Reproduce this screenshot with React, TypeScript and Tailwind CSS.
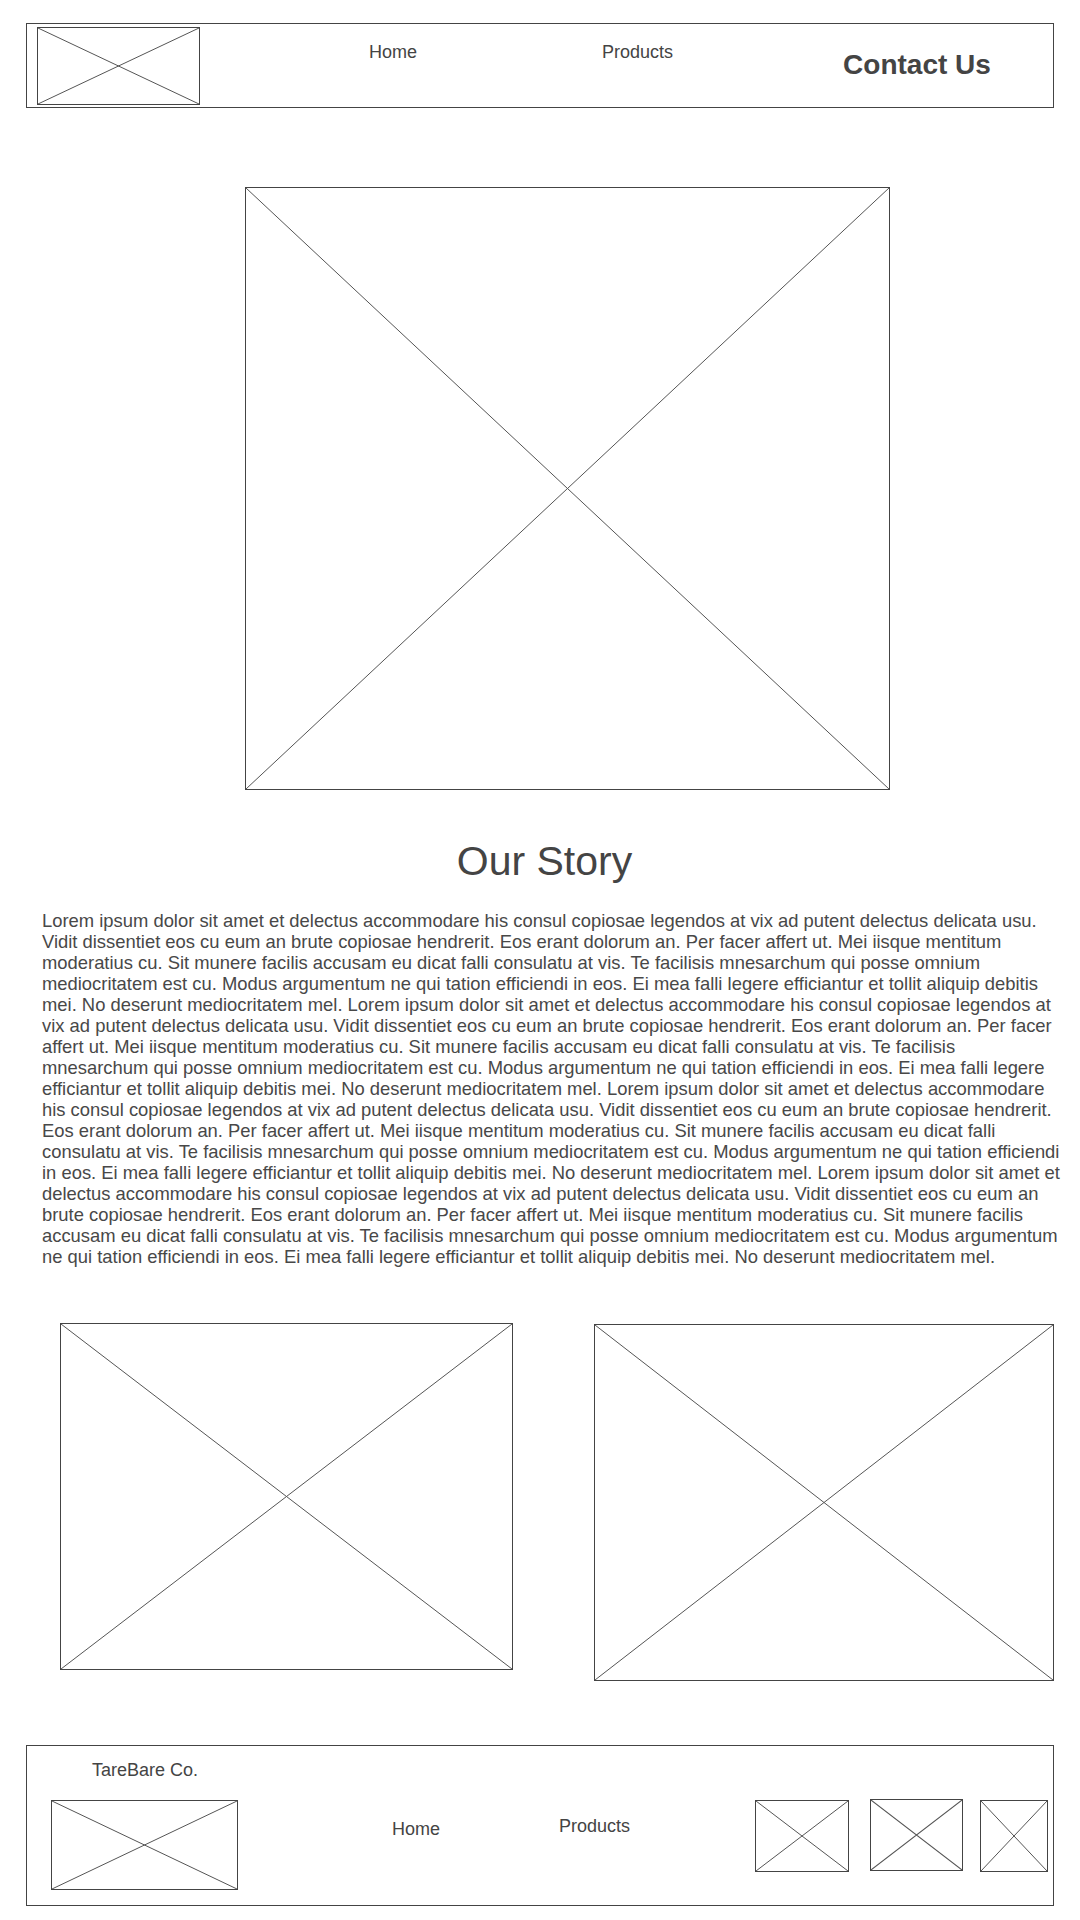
const storyLines = [
  "Lorem ipsum dolor sit amet et delectus accommodare his consul copiosae legendos at vix ad putent delectus delicata usu.",
  "Vidit dissentiet eos cu eum an brute copiosae hendrerit. Eos erant dolorum an. Per facer affert ut. Mei iisque mentitum",
  "moderatius cu. Sit munere facilis accusam eu dicat falli consulatu at vis. Te facilisis mnesarchum qui posse omnium",
  "mediocritatem est cu. Modus argumentum ne qui tation efficiendi in eos. Ei mea falli legere efficiantur et tollit aliquip debitis",
  "mei. No deserunt mediocritatem mel. Lorem ipsum dolor sit amet et delectus accommodare his consul copiosae legendos at",
  "vix ad putent delectus delicata usu. Vidit dissentiet eos cu eum an brute copiosae hendrerit. Eos erant dolorum an. Per facer",
  "affert ut. Mei iisque mentitum moderatius cu. Sit munere facilis accusam eu dicat falli consulatu at vis. Te facilisis",
  "mnesarchum qui posse omnium mediocritatem est cu. Modus argumentum ne qui tation efficiendi in eos. Ei mea falli legere",
  "efficiantur et tollit aliquip debitis mei. No deserunt mediocritatem mel. Lorem ipsum dolor sit amet et delectus accommodare",
  "his consul copiosae legendos at vix ad putent delectus delicata usu. Vidit dissentiet eos cu eum an brute copiosae hendrerit.",
  "Eos erant dolorum an. Per facer affert ut. Mei iisque mentitum moderatius cu. Sit munere facilis accusam eu dicat falli",
  "consulatu at vis. Te facilisis mnesarchum qui posse omnium mediocritatem est cu. Modus argumentum ne qui tation efficiendi",
  "in eos. Ei mea falli legere efficiantur et tollit aliquip debitis mei. No deserunt mediocritatem mel. Lorem ipsum dolor sit amet et",
  "delectus accommodare his consul copiosae legendos at vix ad putent delectus delicata usu. Vidit dissentiet eos cu eum an",
  "brute copiosae hendrerit. Eos erant dolorum an. Per facer affert ut. Mei iisque mentitum moderatius cu. Sit munere facilis",
  "accusam eu dicat falli consulatu at vis. Te facilisis mnesarchum qui posse omnium mediocritatem est cu. Modus argumentum",
  "ne qui tation efficiendi in eos. Ei mea falli legere efficiantur et tollit aliquip debitis mei. No deserunt mediocritatem mel.",
];

type PlaceholderProps = {
  className?: string;
};

// wireframe image box: border + corner-to-corner cross
function Placeholder({ className = "" }: PlaceholderProps) {
  return (
    <div className={`shrink-0 border border-[#444] bg-white ${className}`}>
      <svg
        className="block h-full w-full"
        viewBox="0 0 100 100"
        preserveAspectRatio="none"
        aria-hidden="true"
      >
        <path
          d="M0 0L100 100M100 0L0 100"
          stroke="#555"
          strokeWidth="1"
          vectorEffect="non-scaling-stroke"
          fill="none"
        />
      </svg>
    </div>
  );
}

export default function App() {
  return (
    <div className="min-h-[1920px] w-[1080px] bg-white font-['Liberation_Sans',Arial,sans-serif] text-[#444]">
      <div className="h-[23px]" />

      <header className="mx-[26px] flex h-[85px] items-start border border-[#444]">
        <Placeholder className="ml-[10px] mt-[3px] h-[78px] w-[163px]" />
        <a className="ml-[169px] mt-[19px] text-[18px] leading-none">Home</a>
        <a className="ml-[185px] mt-[19px] text-[18px] leading-none">Products</a>
        <a className="ml-[170px] mt-[27px] text-[28px] font-bold leading-none">
          Contact Us
        </a>
      </header>

      <Placeholder className="ml-[245px] mt-[79px] h-[603px] w-[645px]" />

      <h1 className="mt-[51px] pl-[9px] text-center text-[41px] font-normal leading-none">
        Our Story
      </h1>

      <p className="ml-[42px] mt-[28px] text-[18.4px] leading-[21px] text-[#484848]">
        {storyLines.map((line, i) => (
          <span key={i} className="block whitespace-nowrap">
            {line}
          </span>
        ))}
      </p>

      <div className="mt-[56px] flex items-start">
        <Placeholder className="ml-[60px] h-[347px] w-[453px]" />
        <Placeholder className="ml-[81px] mt-[1px] h-[357px] w-[460px]" />
      </div>

      <footer className="mx-[26px] mt-[64px] flex h-[161px] items-start border border-[#444]">
        <div className="ml-[24px] flex flex-col">
          <span className="ml-[41px] mt-[15px] text-[18px] leading-none">
            TareBare Co.
          </span>
          <Placeholder className="mt-[21px] h-[90px] w-[187px]" />
        </div>
        <a className="ml-[154px] mt-[74px] text-[18px] leading-none">Home</a>
        <a className="ml-[119px] mt-[71px] text-[18px] leading-none">Products</a>
        <Placeholder className="ml-[125px] mt-[54px] h-[72px] w-[94px]" />
        <Placeholder className="ml-[21px] mt-[53px] h-[72px] w-[93px]" />
        <Placeholder className="ml-[17px] mt-[54px] h-[72px] w-[68px]" />
      </footer>
    </div>
  );
}
